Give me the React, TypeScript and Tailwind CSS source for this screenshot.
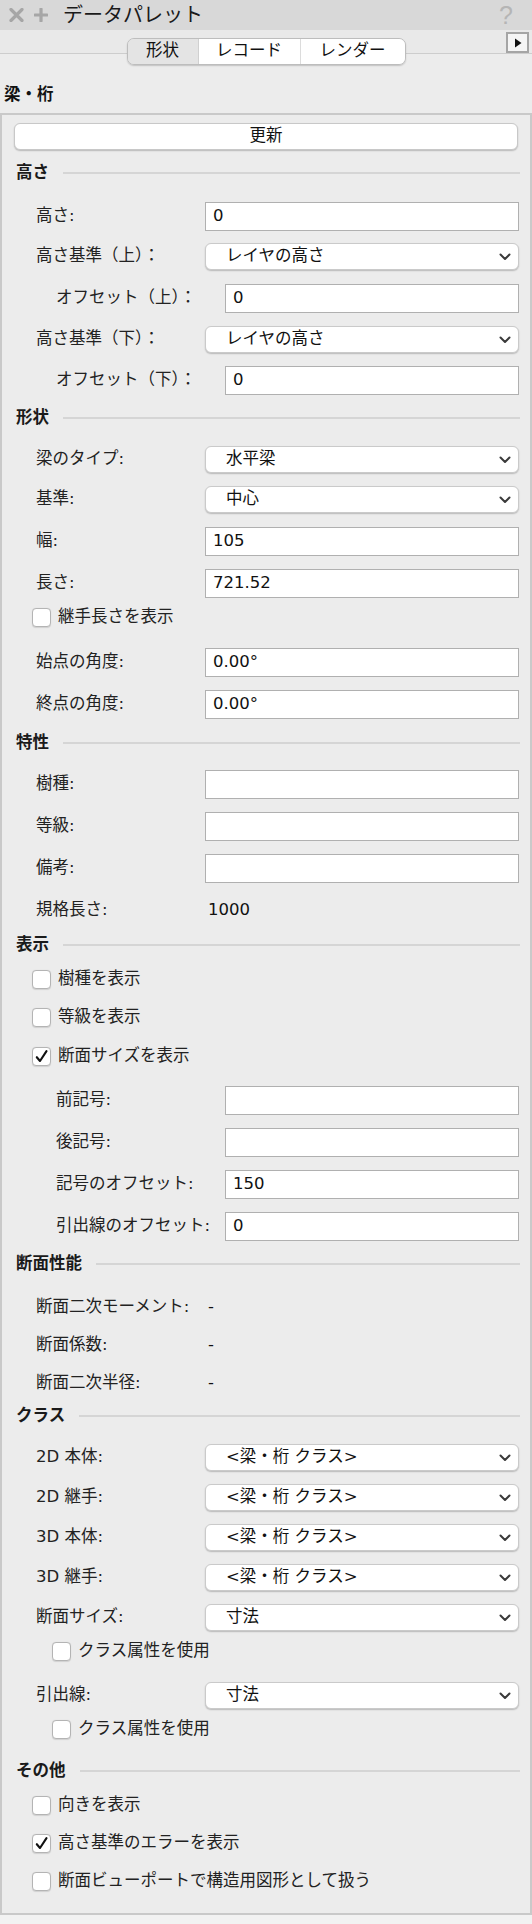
import React from "react";

const FONT = "font-['DejaVu_Sans','Noto_Sans_CJK_JP',sans-serif]";

function Chevron() {
  return (
    <svg width="12" height="8" viewBox="0 0 12 8" className="shrink-0">
      <path d="M1.5 1.5 L6 6 L10.5 1.5" fill="none" stroke="#3a3a3a" strokeWidth="2" strokeLinecap="round" strokeLinejoin="round" />
    </svg>
  );
}

function Heading({ title, mt }: { title: string; mt: string }) {
  return (
    <div className={`flex items-center h-[20px] pl-[14px] pr-[10px] ${mt}`}>
      <div className="font-bold text-[16.5px] text-[#1a1a1a] leading-none whitespace-nowrap">{title}</div>
      <div className="flex-1 h-[2px] bg-[#d5d5d5] ml-[14px]" />
    </div>
  );
}

function InputRow({ label, value, indent, mt }: { label: string; value: string; indent?: boolean; mt: string }) {
  return (
    <div className={`flex items-center pr-[11px] ${indent ? "pl-[54px]" : "pl-[34px]"} ${mt}`}>
      <div className="w-[169px] shrink-0 text-[16.5px] text-[#222] leading-none whitespace-nowrap">{label}</div>
      <div className="flex-1 h-[29px] bg-white border-[1.5px] border-[#b0b0b0] flex items-center pl-[7px] text-[16.5px] text-[#111] leading-none">
        {value}
      </div>
    </div>
  );
}

function SelectRow({ label, value, mt }: { label: string; value: string; mt: string }) {
  return (
    <div className={`flex items-center pr-[11px] pl-[34px] ${mt}`}>
      <div className="w-[169px] shrink-0 text-[16.5px] text-[#222] leading-none whitespace-nowrap">{label}</div>
      <div className="flex-1 h-[27px] bg-white rounded-[6px] border border-[#cacaca] shadow-[0_1px_1.5px_rgba(0,0,0,0.22)] flex items-center justify-between pl-[20px] pr-[7px] text-[16.5px] text-[#111] leading-none">
        <span className="whitespace-nowrap">{value}</span>
        <Chevron />
      </div>
    </div>
  );
}

function CheckRow({ label, checked, sub, mt }: { label: string; checked?: boolean; sub?: boolean; mt: string }) {
  return (
    <div className={`flex items-center gap-[7px] ${sub ? "pl-[50px]" : "pl-[30px]"} ${mt}`}>
      <div className="w-[19px] h-[19px] shrink-0 bg-white rounded-[4px] border border-[#b4b4b4] shadow-[0_0.5px_1px_rgba(0,0,0,0.12)] flex items-center justify-center">
        {checked && (
          <svg width="15" height="15" viewBox="0 0 15 15">
            <path d="M2.8 8.2 L6 12 L12.5 2.2" fill="none" stroke="#111" strokeWidth="2.1" strokeLinecap="round" strokeLinejoin="round" />
          </svg>
        )}
      </div>
      <div className="text-[16.5px] text-[#222] leading-none whitespace-nowrap">{label}</div>
    </div>
  );
}

function TextRow({ label, value, mt }: { label: string; value: string; mt: string }) {
  return (
    <div className={`flex items-center h-[20px] pl-[34px] pr-[11px] ${mt}`}>
      <div className="w-[169px] shrink-0 text-[16.5px] text-[#222] leading-none whitespace-nowrap">{label}</div>
      <div className="pl-[3px] text-[16.5px] text-[#111] leading-none">{value}</div>
    </div>
  );
}

export default function App() {
  return (
    <div className={`w-[532px] min-h-[1924px] flex flex-col bg-[#ececec] ${FONT}`}>
      {/* Title bar */}
      <div className="h-[30px] bg-[#d8d8d8] flex items-center pl-[9px] pr-[19px]">
        <svg width="15" height="14" viewBox="0 0 15 14" className="shrink-0">
          <path d="M2 1.5 L13 12.5 M13 1.5 L2 12.5" stroke="#a6a6a6" strokeWidth="3.2" strokeLinecap="round" />
        </svg>
        <svg width="14" height="14" viewBox="0 0 14 14" className="shrink-0 ml-[10px]">
          <path d="M7 1 L7 13 M1 7 L13 7" stroke="#a6a6a6" strokeWidth="3.2" strokeLinecap="round" />
        </svg>
        <div className="ml-[15px] text-[20px] text-[#1a1a1a] leading-none">データパレット</div>
        <div className="ml-auto font-['Liberation_Sans',sans-serif] text-[25px] text-[#b5b5b5] leading-none">?</div>
      </div>

      {/* Tab strip */}
      <div className="bg-[linear-gradient(to_bottom,#e9e9e9_0px,#e9e9e9_23px,#cdcdcd_23px,#cdcdcd_24px,#ececec_24px)]">
        <div className="grid grid-cols-[1fr_auto_1fr]">
          <div />
          <div className="mt-[8px] h-[27px] flex rounded-[7px] border border-[#bdbdbd] shadow-[0_1px_1.5px_rgba(0,0,0,0.18)] overflow-hidden text-[16.5px] text-[#111] leading-none">
            <div className="w-[71px] bg-[#e4e4e4] flex items-center justify-center border-r border-[#d0d0d0]">形状</div>
            <div className="w-[102px] bg-white flex items-center justify-center border-r border-[#dcdcdc]">レコード</div>
            <div className="w-[104px] bg-white flex items-center justify-center">レンダー</div>
          </div>
          <div className="justify-self-end mt-[2px] mr-[3px] w-[23px] h-[21px] border-2 border-[#a5a5a5] bg-[#f5f5f5] flex items-center justify-center">
            <svg width="8" height="10" viewBox="0 0 8 10">
              <path d="M1 0.5 L7.5 5 L1 9.5 Z" fill="#111" />
            </svg>
          </div>
        </div>
        <div className="mt-[20px] h-[20px] pl-[4px] flex items-center font-bold text-[16.5px] text-[#111] leading-none">梁・桁</div>
      </div>

      {/* Panel */}
      <div className="mt-[8px] border-2 border-[#c9c9c9] bg-[#ececec] pb-[22px]">
        <div className="mt-[8px] ml-[12px] mr-[12px] h-[27px] bg-white rounded-[6px] border border-[#c8c8c8] shadow-[0_1px_1.5px_rgba(0,0,0,0.22)] flex items-center justify-center text-[16.5px] text-[#111] leading-none">
          更新
        </div>

        <Heading title="高さ" mt="mt-[13px]" />
        <InputRow label="高さ:" value="0" mt="mt-[19px]" />
        <SelectRow label="高さ基準（上）：" value="レイヤの高さ" mt="mt-[12px]" />
        <InputRow label="オフセット（上）：" value="0" indent mt="mt-[14px]" />
        <SelectRow label="高さ基準（下）：" value="レイヤの高さ" mt="mt-[13px]" />
        <InputRow label="オフセット（下）：" value="0" indent mt="mt-[13px]" />

        <Heading title="形状" mt="mt-[13px]" />
        <SelectRow label="梁のタイプ:" value="水平梁" mt="mt-[18px]" />
        <SelectRow label="基準:" value="中心" mt="mt-[13px]" />
        <InputRow label="幅:" value="105" mt="mt-[14px]" />
        <InputRow label="長さ:" value="721.52" mt="mt-[13px]" />
        <CheckRow label="継手長さを表示" mt="mt-[10px]" />
        <InputRow label="始点の角度:" value="0.00°" mt="mt-[21px]" />
        <InputRow label="終点の角度:" value="0.00°" mt="mt-[13px]" />

        <Heading title="特性" mt="mt-[14px]" />
        <InputRow label="樹種:" value="" mt="mt-[17px]" />
        <InputRow label="等級:" value="" mt="mt-[13px]" />
        <InputRow label="備考:" value="" mt="mt-[13px]" />
        <TextRow label="規格長さ:" value="1000" mt="mt-[17px]" />

        <Heading title="表示" mt="mt-[15px]" />
        <CheckRow label="樹種を表示" mt="mt-[15px]" />
        <CheckRow label="等級を表示" mt="mt-[19px]" />
        <CheckRow label="断面サイズを表示" checked mt="mt-[20px]" />
        <InputRow label="前記号:" value="" indent mt="mt-[20px]" />
        <InputRow label="後記号:" value="" indent mt="mt-[13px]" />
        <InputRow label="記号のオフセット:" value="150" indent mt="mt-[13px]" />
        <InputRow label="引出線のオフセット:" value="0" indent mt="mt-[13px]" />

        <Heading title="断面性能" mt="mt-[13px]" />
        <TextRow label="断面二次モーメント:" value="-" mt="mt-[23px]" />
        <TextRow label="断面係数:" value="-" mt="mt-[18px]" />
        <TextRow label="断面二次半径:" value="-" mt="mt-[18px]" />

        <Heading title="クラス" mt="mt-[13px]" />
        <SelectRow label="2D 本体:" value="<梁・桁 クラス>" mt="mt-[18px]" />
        <SelectRow label="2D 継手:" value="<梁・桁 クラス>" mt="mt-[13px]" />
        <SelectRow label="3D 本体:" value="<梁・桁 クラス>" mt="mt-[13px]" />
        <SelectRow label="3D 継手:" value="<梁・桁 クラス>" mt="mt-[13px]" />
        <SelectRow label="断面サイズ:" value="寸法" mt="mt-[13px]" />
        <CheckRow label="クラス属性を使用" sub mt="mt-[11px]" />
        <SelectRow label="引出線:" value="寸法" mt="mt-[21px]" />
        <CheckRow label="クラス属性を使用" sub mt="mt-[11px]" />

        <Heading title="その他" mt="mt-[22px]" />
        <CheckRow label="向きを表示" mt="mt-[15px]" />
        <CheckRow label="高さ基準のエラーを表示" checked mt="mt-[19px]" />
        <CheckRow label="断面ビューポートで構造用図形として扱う" mt="mt-[19px]" />
      </div>
      <div className="flex-1 bg-[#f2f2f2]" />
    </div>
  );
}
